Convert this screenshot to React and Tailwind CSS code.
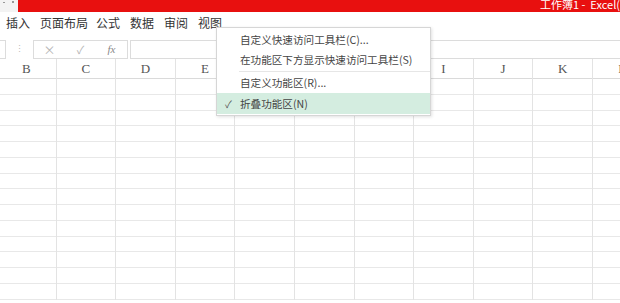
const cols = ["B", "C", "D", "E", "F", "G", "H", "I", "J", "K", "L"];
const rows = Array.from({ length: 14 });

const menuItems = ["插入", "页面布局", "公式", "数据", "审阅", "视图"];

const App = () => {
  return (
    <div
      className="relative w-[620px] h-[303px] overflow-hidden bg-white text-[#333]"
      style={{ fontFamily: '"Noto Sans CJK SC", "Noto Sans", sans-serif' }}
    >
      {/* Title bar */}
      <div className="flex h-[12px]">
        <div className="relative w-[18px] bg-[#f3f3f3]">
          <span className="absolute left-[3px] top-[2px] w-[2px] h-[1px] bg-[#999]" />
          <span className="absolute left-[12px] top-[1px] w-[2px] h-[2px] bg-[#999]" />
        </div>
        <div className="flex-1 bg-[#e8100f] overflow-hidden">
          <div className="pl-[522px] whitespace-nowrap text-white text-[11px] leading-[11px] -mt-[1px]">
            工作簿1 -&nbsp;&nbsp;Excel(练习)
          </div>
        </div>
      </div>

      {/* Menu bar */}
      <div className="flex items-center h-[22px] pl-[6px] gap-[10px] text-[12px]">
        {menuItems.map((m) => (
          <span key={m} className={m === "页面布局" ? "w-[46px] whitespace-nowrap" : "whitespace-nowrap"}>
            {m}
          </span>
        ))}
      </div>

      {/* Formula bar */}
      <div className="flex items-start h-[25px] pt-[6px]">
        <div className="w-[6px] h-[19px] border border-l-0 border-[#dcdcdc]" />
        <div className="w-[27px] flex justify-center pt-[4px] text-[9px] text-[#bbb] leading-[9px]">⋮</div>
        <div className="flex items-center w-[95px] h-[19px] border border-[#dcdcdc] text-[#b5b5b5]">
          <span className="w-[31px] text-center text-[12px]">×</span>
          <span className="w-[31px] text-center text-[11px]">✓</span>
          <span
            className="w-[31px] text-center text-[11px] italic text-[#888]"
            style={{ fontFamily: '"Liberation Serif", serif' }}
          >
            fx
          </span>
        </div>
        <div className="flex-1 ml-[2px] h-[19px] border border-r-0 border-[#dcdcdc]" />
      </div>

      {/* Sheet grid */}
      <div className="flex -ml-[3px]">
        {cols.map((c) => (
          <div key={c} className="w-[59.6px] shrink-0 border-r border-[#e3e3e3]">
            <div
              className="h-[20px] flex items-center justify-center border-b border-[#dadada] text-[13px] text-[#555]"
              style={{ fontFamily: '"Liberation Serif", serif' }}
            >
              {c}
            </div>
            {rows.map((_, i) => (
              <div key={i} className="h-[15.77px] border-b border-[#e8e8e8]" />
            ))}
          </div>
        ))}
      </div>

      {/* Context menu */}
      <div className="absolute left-[216px] top-[27px] w-[215px] bg-white border border-[#d6d6d6] shadow-[1px_1px_3px_rgba(0,0,0,0.12)] pt-[2px] pb-[1px] text-[10.6px] text-[#444] whitespace-nowrap">
        <div className="h-[20px] flex items-center pl-[23px]">自定义快速访问工具栏(C)...</div>
        <div className="h-[20px] flex items-center pl-[23px]">在功能区下方显示快速访问工具栏(S)</div>
        <div className="mt-[1px] ml-[22px] border-t border-[#e6e6e6]" />
        <div className="h-[20px] mt-[1px] flex items-center pl-[23px]">自定义功能区(R)...</div>
        <div className="h-[21px] flex items-center bg-[#d4ede0]">
          <span className="w-[23px] text-center text-[10px] text-[#555]">✓</span>
          <span>折叠功能区(N)</span>
        </div>
      </div>
    </div>
  );
};

export default App;
